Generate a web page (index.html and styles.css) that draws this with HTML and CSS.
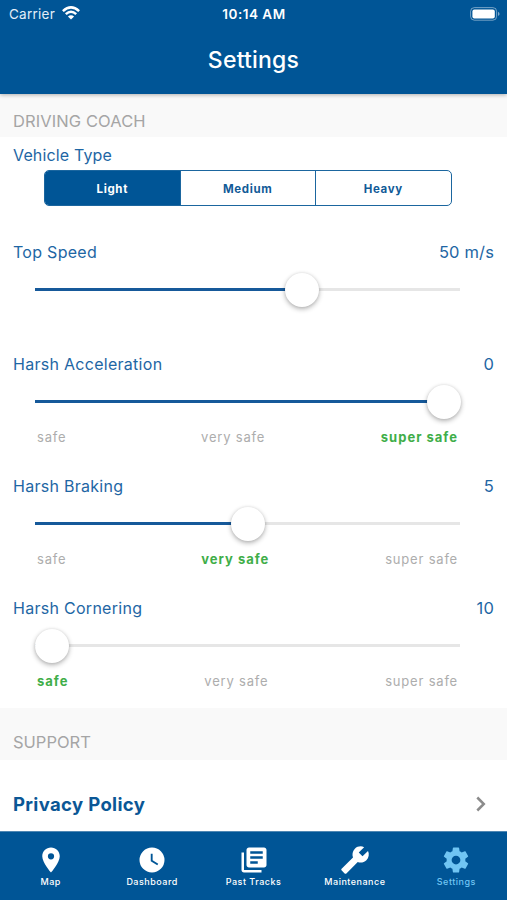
FILE: index.html
```html
<!DOCTYPE html>
<html lang="en">
<head>
<meta charset="utf-8">
<title>Settings</title>
<link rel="stylesheet" href="styles.css">
</head>
<body>
<div class="app">
  <header class="header">
    <div class="status">
      <div class="status-left"><span class="carrier">Carrier</span>
        <svg class="wifi" viewBox="0 0 18 14" fill="none" stroke="#fff" stroke-width="2.5"><path d="M.9 5.200Q9-2.400 17.100 5.200"/><path d="M3.800 8.200Q9 3.400 14.200 8.200"/><path d="M9 13.600L5.900 10.500Q9 7.900 12.100 10.500Z" fill="#fff" stroke="none"/></svg>
      </div>
      <span class="time">10:14 AM</span>
      <div class="status-right">
        <svg class="battery" viewBox="0 0 30 14"><rect x=".6" y=".6" width="26" height="12.6" rx="3.8" fill="none" stroke="#fff" stroke-opacity=".45"/><rect x="2.400" y="2.400" width="22.400" height="9" rx="2" fill="#fff"/><path d="M28 4.700q3.200 2.200 0 4.400z" fill="#fff" fill-opacity=".5"/></svg>
      </div>
    </div>
    <h1 class="title">Settings</h1>
  </header>
  <main class="content">
    <h2 class="section first">DRIVING COACH</h2>
    <section class="vehicle">
      <div class="label vehicle-label">Vehicle Type</div>
      <div class="segments"><div class="segment active">Light</div><div class="segment">Medium</div><div class="segment">Heavy</div></div>
    </section>
    <section class="setting speed">
      <div class="row"><span class="label">Top Speed</span><span class="label value">50 m/s</span></div>
      <div class="slider" style="--pos:267px"><div class="fill"></div><div class="thumb"></div></div>
    </section>
    <section class="setting">
      <div class="row"><span class="label">Harsh Acceleration</span><span class="label value">0</span></div>
      <div class="slider" style="--pos:408.5px"><div class="fill"></div><div class="thumb"></div></div>
      <div class="scale"><span>safe</span><span>very safe</span><span class="on">super safe</span></div>
    </section>
    <section class="setting">
      <div class="row"><span class="label">Harsh Braking</span><span class="label value">5</span></div>
      <div class="slider" style="--pos:213px"><div class="fill"></div><div class="thumb"></div></div>
      <div class="scale"><span>safe</span><span class="on">very safe</span><span>super safe</span></div>
    </section>
    <section class="setting last">
      <div class="row"><span class="label">Harsh Cornering</span><span class="label value">10</span></div>
      <div class="slider" style="--pos:17.3px"><div class="fill"></div><div class="thumb"></div></div>
      <div class="scale"><span class="on">safe</span><span>very safe</span><span>super safe</span></div>
    </section>
    <h2 class="section support">SUPPORT</h2>
    <div class="link"><span class="link-text">Privacy Policy</span>
      <svg class="chevron" viewBox="0 0 10 16" fill="none" stroke="#8b8b8b" stroke-width="2.5"><path d="M1.300 1.500L7.800 8L1.300 14.500"/></svg>
    </div>
  </main>
  <nav class="tabs">
    <div class="tab"><svg viewBox="0 0 24 24"><path d="M12 2C8.13 2 5 5.13 5 9c0 5.25 7 13 7 13s7-7.75 7-13c0-3.87-3.13-7-7-7zm0 9.5a2.5 2.5 0 0 1 0-5 2.5 2.5 0 0 1 0 5z"/></svg><span>Map</span></div>
    <div class="tab"><svg viewBox="0 0 24 24"><path fill-rule="evenodd" d="M12 2a10 10 0 1 0 0 20a10 10 0 0 0 0-20zM16.2 16.2L11 13V7h1.5v5.2l4.5 2.7-.8 1.3z"/></svg><span>Dashboard</span></div>
    <div class="tab"><svg viewBox="0 0 24 24"><path d="M4 6H2v14c0 1.1.9 2 2 2h14v-2H4V6zm16-4H8c-1.100 0-2 .9-2 2v12c0 1.100.9 2 2 2h12c1.100 0 2-.9 2-2V4c0-1.100-.9-2-2-2zm-1 9H9V9h10v2zm-4 4H9v-2h6v2zm4-8H9V5h10v2z"/></svg><span>Past Tracks</span></div>
    <div class="tab"><svg viewBox="0 0 24 24"><g transform="translate(24 0) scale(-1 1)"><path d="M22.700 19l-9.100-9.100c.9-2.300.4-5-1.500-6.900-2-2-5-2.400-7.400-1.300L9 6 6 9 1.600 4.700C.4 7.100.9 10.100 2.900 12.100c1.900 1.900 4.600 2.400 6.900 1.500l9.100 9.100c.4.4 1 .4 1.400 0l2.300-2.300c.5-.4.5-1.100.1-1.400z"/></g></svg><span>Maintenance</span></div>
    <div class="tab selected"><svg viewBox="0 0 24 24"><path d="M19.430 12.980c.04-.32.070-.64.070-.98s-.03-.66-.07-.98l2.110-1.650c.19-.15.240-.42.120-.64l-2-3.460c-.12-.22-.39-.3-.61-.22l-2.490 1c-.52-.4-1.080-.73-1.690-.98l-.38-2.650C14.460 2.180 14.250 2 14 2h-4c-.25 0-.46.18-.49.42l-.38 2.650c-.61.25-1.170.59-1.690.98l-2.490-1c-.23-.09-.49 0-.61.22l-2 3.460c-.13.22-.07.49.120.64l2.110 1.650c-.04.32-.07.65-.07.98s.03.66.070.98l-2.110 1.650c-.19.15-.24.42-.12.64l2 3.460c.12.22.39.3.61.22l2.490-1c.52.4 1.080.73 1.690.98l.38 2.650c.03.240.240.420.490.420h4c.25 0 .46-.18.490-.42l.38-2.650c.61-.25 1.170-.59 1.690-.98l2.490 1c.23.09.49 0 .61-.22l2-3.460c.12-.22.070-.49-.12-.64l-2.110-1.650zM12 15.500a3.500 3.500 0 1 1 0-7 3.500 3.500 0 0 1 0 7z"/></svg><span>Settings</span></div>
  </nav>
</div>
</body>
</html>
```
FILE: styles.css
```css
* { box-sizing: border-box; }
body { margin: 0; font-family: Inter, "Liberation Sans", sans-serif; background: #fff; }
.app { width: 507px; height: 900px; display: flex; flex-direction: column; overflow: hidden; }
.header { position: relative; height: 94px; flex: none; background: #005596; color: #fff; box-shadow: 0 1px 4px rgba(0,0,0,.3); }
.status { height: 28px; display: grid; grid-template-columns: 1fr auto 1fr; align-items: center; padding: 0 8px 0 9px; }
.status-left { display: flex; align-items: center; gap: 7px; }
.carrier { letter-spacing: .25px; color: #e3eef8; font-size: 13.500px; }
.wifi { width: 18px; height: 14px; margin-top: -2px; }
.time { font-size: 13.500px; font-weight: 600; letter-spacing: .5px; }
.status-right { display: flex; justify-content: flex-end; }
.battery { width: 30px; height: 14px; margin-right: -1px; }
.title { margin: 0; padding-top: 17px; line-height: 30px; text-align: center; font-size: 23px; font-weight: 500; letter-spacing: .2px; }
.content { flex: 1; min-height: 0; }
.section { margin: 0; padding-left: 13px; background: #f9f9f9; color: #a5a5a5; font-size: 16.500px; font-weight: 400; line-height: 20px; }
.first { height: 43px; padding-top: 17px; letter-spacing: .1px; }
.support { height: 52px; padding-top: 24px; }
.vehicle { height: 97px; padding: 8px 13px 0; }
.label { display: block; font-size: 16px; line-height: 20px; color: #1e66a4; letter-spacing: .28px; }
.vehicle-label { letter-spacing: .15px; }
.segments { display: flex; width: 407.500px; height: 36px; margin: 5px 0 0 31px; border: 1.500px solid #1b669f; border-radius: 5px; overflow: hidden; }
.segment { flex: 1; display: flex; align-items: center; justify-content: center; padding-top: 1px; color: #125b98; font-size: 11.500px; font-weight: 700; letter-spacing: .65px; }
.segment + .segment { border-left: 1px solid #1b669f; }
.segment.active { background: #005596; color: #fff; }
.setting { height: 122px; padding: 9px 13px 0; }
.speed { height: 111px; padding-top: 8px; }
.last { height: 119px; }
.row { display: flex; justify-content: space-between; }
.value { font-size: 16.500px; letter-spacing: .15px; }
.slider { position: relative; width: 425px; height: 3px; margin: 26px 0 0 22px; background: #e6e6e6; }
.fill { width: var(--pos); height: 3px; background: #16599a; }
.thumb { position: absolute; left: calc(var(--pos) - 17px); top: -15.500px; width: 34px; height: 34px; border-radius: 50%; background: #fff; box-shadow: 0 2px 5px rgba(0,0,0,.3), 0 0 3px rgba(0,0,0,.08); }
.scale { display: flex; justify-content: space-between; margin: 25px 36px 0 24px; font-size: 13px; line-height: 18px; color: #adadad; letter-spacing: .8px; }
.scale span:first-child { margin-right: 19px; }
.scale .on { color: #3fae49; font-weight: 700; letter-spacing: 1px; }
.link { display: flex; align-items: center; justify-content: space-between; height: 71px; padding: 17px 21px 0 13px; }
.link-text { font-size: 18.500px; font-weight: 700; color: #0b5796; letter-spacing: .35px; }
.chevron { width: 10px; height: 16px; }
.tabs { display: flex; height: 69px; flex: none; background: #005596; border-top: 1px solid #4f87b3; }
.tab { flex: 1; display: flex; flex-direction: column; align-items: center; padding-top: 12.500px; color: #fff; font-size: 9px; line-height: 13px; letter-spacing: .5px; font-weight: 500; }
.tab svg { width: 30px; height: 30px; fill: currentColor; }
.selected { color: #70c5f3; }
```
